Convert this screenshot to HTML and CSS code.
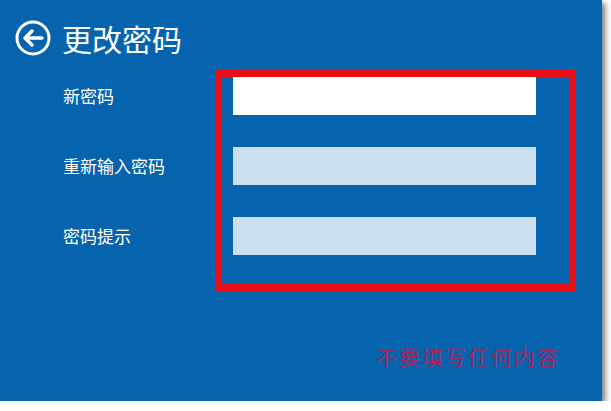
FILE: index.html
```html
<!DOCTYPE html>
<html lang="zh-CN">
<head>
    <meta charset="UTF-8">
    <meta name="viewport" content="width=device-width, initial-scale=1.0">
    <title>更改密码</title>
    <link rel="stylesheet" href="styles.css">
</head>
<body>
    <div class="panel">
        <div class="header">
            <svg class="back" width="36" height="36" viewBox="0 0 36 36">
                <circle cx="18" cy="18" r="16" fill="none" stroke="#fff" stroke-width="3"/>
                <path d="M27 18 H10 M17 11 L10 18 L17 25" fill="none" stroke="#fff" stroke-width="3.5" stroke-linecap="round" stroke-linejoin="round"/>
            </svg>
            <h1>更改密码</h1>
        </div>

        <div class="form">
            <div class="labels">
                <label>新密码</label>
                <label>重新输入密码</label>
                <label>密码提示</label>
            </div>
            <div class="fields">
                <input type="password" class="active">
                <input type="password">
                <input type="text">
            </div>
        </div>

        <div class="note">不要填写任何内容</div>
    </div>
</body>
</html>
```

FILE: styles.css
```css
body {
    margin: 0;
    background: #fff;
    font-family: "Noto Sans CJK SC", "Noto Sans", sans-serif;
}

.panel {
    width: 602px;
    height: 401px;
    background: #0663ae;
    color: #fff;
    box-shadow: 3px 3px 6px rgba(0, 0, 0, 0.55);
}

.header {
    display: flex;
    align-items: center;
    gap: 11px;
    padding: 20px 0 0 15px;
    height: 36px;
}

.header h1 {
    margin: 0;
    font-size: 30px;
    font-weight: normal;
    line-height: 36px;
}

.form {
    display: flex;
    margin-top: 14px;
}

.labels {
    width: 152px;
    padding: 7px 0 0 63px;
    display: flex;
    flex-direction: column;
    gap: 32px;
}

.labels label {
    height: 38px;
    line-height: 38px;
    font-size: 17px;
}

.fields {
    width: 303px;
    border: 7px solid #ec0d16;
    padding: 0 33px 29px 11px;
    display: flex;
    flex-direction: column;
    gap: 32px;
}

input {
    height: 38px;
    box-sizing: border-box;
    border: none;
    margin: 0;
    background: #cbdfee;
}

input.active {
    background: #fff;
}

.note {
    margin-top: 50px;
    padding-right: 42px;
    text-align: right;
    font-size: 21px;
    letter-spacing: 2px;
    color: #a3275f;
}
```
